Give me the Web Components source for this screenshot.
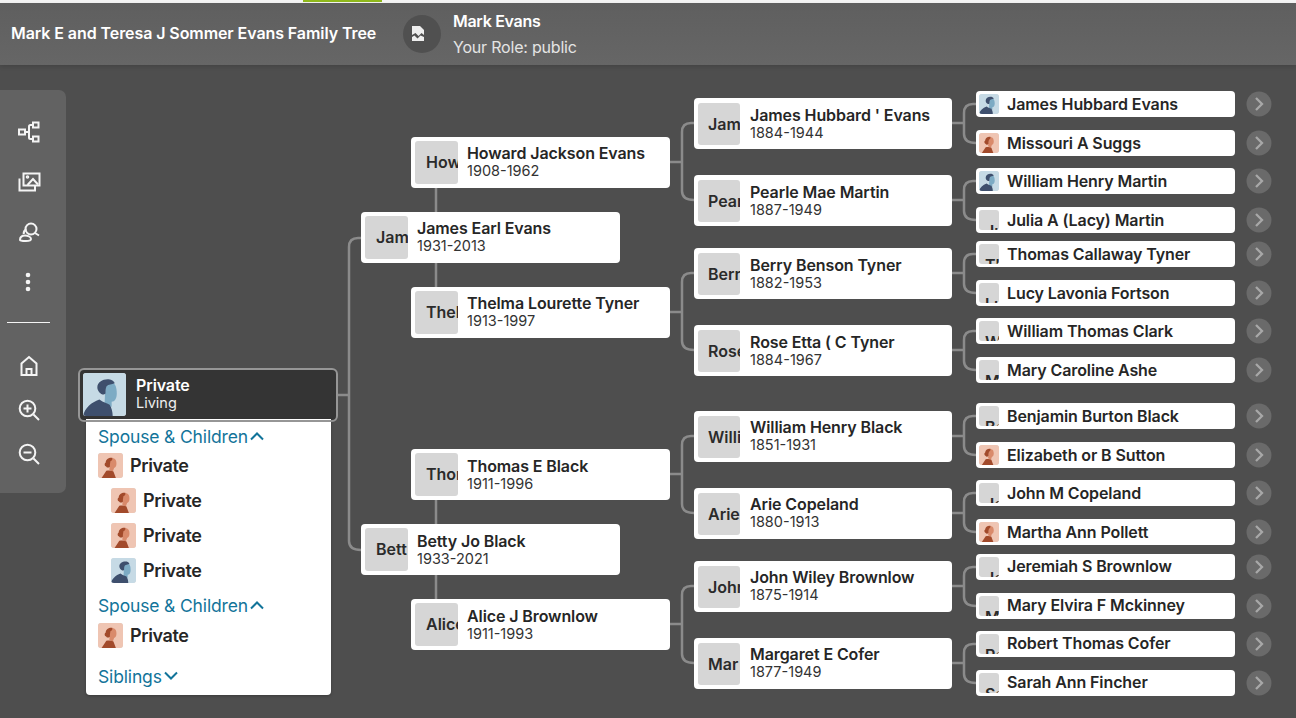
<!DOCTYPE html>
<html>
<head>
<meta charset="utf-8">
<title>Family Tree</title>
<style>
  html, body { margin: 0; height: 100%; overflow: hidden; background: #4e4e4e; font-family: Inter, "Liberation Sans", sans-serif; }
</style>
</head>
<body>
<family-page></family-page>
<script>
const ICONS = {
  tree: `<path d="M8 12h4M12 12V6.500q0-1.500 1.500-1.500H16M12 12v5.500q0 1.500 1.500 1.500H16"/><rect x="2" y="9.500" width="6" height="5"/><rect x="16" y="2.500" width="5.500" height="5"/><rect x="16" y="16.500" width="5.500" height="5"/>`,
  photos: `<rect x="6.500" y="3.500" width="16" height="12"/><path d="M2.500 8.500v12h15.500v-5M10.500 15l5.500-6 5 5.500"/><circle cx="10.500" cy="7" r=".8"/>`,
  search: `<circle cx="14" cy="9" r="5.500"/><path d="M18 13l4 2.500M9.500 9.500c-2 .5-3 2-2.800 4.500M3 20c0-3 2-4.500 5-4.500s6 1.500 6 3.500c0 1.500-1.500 2-5 2s-6-.3-6-1z"/>`,
  home: `<path d="M4.500 21V9.500L12 3l7.500 6.500V21zM9.500 21v-6h5v6"/>`,
  zoomin: `<circle cx="10.500" cy="10.500" r="7.800"/><path d="M16.500 16.500L22 22M6.500 10.500h8M10.500 6.500v8"/>`,
  zoomout: `<circle cx="10.500" cy="10.500" r="7.800"/><path d="M16.500 16.500L22 22M6.500 10.500h8"/>`,
};

class PersonAvatar extends HTMLElement {
  connectedCallback() {
    const kind = this.getAttribute("kind");
    const label = this.getAttribute("label") || "";
    const male = `<rect width="42" height="42" fill="#c6dae5"/>
      <path d="M22 9h6c4 1 5 6 5 11 0 5-2 8-5 8v5l-7-1z" fill="#7dabc4"/>
      <path d="M14 14c0-5 5-8 10-8 3 0 6 1 7 4-3 1-6 1-8 3-1 2-1 5-1 7-1 1-2 1-3 1-3-1-5-4-5-7z" fill="#3e4f6d"/>
      <path d="M0 42c2-8 8-13 16-16 4 3 8 4 10 5 2 3 3 7 3 11z" fill="#3e4f6d"/>`;
    const female = `<rect width="42" height="42" fill="#efc5b3"/>
      <path d="M21 9h5c4 1 5 5 5 9 0 4-2 7-4 7l-2 6-6-3z" fill="#d98a6b"/>
      <path d="M14 23c-3-1-4-5-1-7 0-6 6-9 11-8 1 3-1 5-3 6-1 3-1 6-1 9-2 2-5 2-6 0z" fill="#a24a2b"/>
      <path d="M6 42l8-12c4-1 8-1 12 1l4 11z" fill="#a24a2b"/>`;
    let inner = "";
    if (kind === "m") inner = `<svg viewBox="0 0 42 42">${male}</svg>`;
    else if (kind === "f") inner = `<svg viewBox="0 0 42 42">${female}</svg>`;
    else inner = `<span>${label}</span>`;
    this.attachShadow({ mode: "open" }).innerHTML = `
    <style>
      :host { display: block; flex: none; overflow: hidden; border-radius: 3px; background: #d6d6d6; width: var(--av, 43px); height: var(--av, 43px); }
      svg { display: block; width: 100%; height: 100%; }
      span {
        display: block;
        padding: 12px 0 0 var(--av-inset, 11px);
        font-size: 16px;
        line-height: 19px;
        font-weight: 600;
        color: #2b2b2b;
        white-space: nowrap;
      }
    </style>
    ${inner}`;
  }
}
customElements.define("person-avatar", PersonAvatar);

class PersonCard extends HTMLElement {
  connectedCallback() {
    const name = this.getAttribute("name");
    const years = this.getAttribute("years");
    const kind = this.getAttribute("kind") || "";
    const label = this.getAttribute("label") || "";
    const small = !years;
    this.attachShadow({ mode: "open" }).innerHTML = `
    <style>
      :host {
        display: flex;
        align-items: center;
        box-sizing: border-box;
        background: #fff;
        border-radius: 4px;
        color: #262626;
        padding: 0 4px;
        gap: 9px;
        overflow: hidden;
      }
      :host([wide]) { --av: 42px; --av-inset: 10px; gap: 10px; padding: 0 4px; }
      :host([small]) { padding: 0 3px; gap: 8px; --av: 20px; --av-inset: 6px; }
      :host([lift]) .text { margin-bottom: 2px; }
      .name { font-size: 16px; line-height: 17px; font-weight: 600; letter-spacing: -.1px; white-space: nowrap; }
      .years { font-size: 14.500px; line-height: 17px; color: #333; }
    </style>
    <person-avatar kind="${kind}" label="${label}"></person-avatar>
    <div class="text">
      <div class="name">${name}</div>
      ${small ? "" : `<div class="years">${years}</div>`}
    </div>`;
  }
}
customElements.define("person-card", PersonCard);

class RelationHead extends HTMLElement {
  connectedCallback() {
    const up = this.hasAttribute("open");
    this.attachShadow({ mode: "open" }).innerHTML = `
    <style>
      :host { display: flex; align-items: center; height: 22px; gap: 1px; color: #12749a; font-size: 17.500px; letter-spacing: -.15px; }
      svg { width: 16px; height: 10px; fill: none; stroke: #12749a; stroke-width: 2; }
    </style>
    <slot></slot>
    <svg viewBox="0 0 16 10"><path d="${up ? "M2 8.500l6-6 6 6" : "M2 1.500l6 6 6-6"}"/></svg>`;
  }
}
customElements.define("relation-head", RelationHead);

class RelationRow extends HTMLElement {
  connectedCallback() {
    const kind = this.getAttribute("kind");
    this.attachShadow({ mode: "open" }).innerHTML = `
    <style>
      :host { display: flex; align-items: center; gap: 7px; height: 25px; font-size: 18px; font-weight: 600; letter-spacing: -.4px; color: #262626; --av: 25px; }
      :host([nested]) { margin-left: 13px; }
    </style>
    <person-avatar kind="${kind}"></person-avatar>
    <slot></slot>`;
  }
}
customElements.define("relation-row", RelationRow);

class RootPerson extends HTMLElement {
  connectedCallback() {
    this.attachShadow({ mode: "open" }).innerHTML = `
    <style>
      :host { display: block; width: 260px; color: #262626; }
      .card {
        display: flex; align-items: center; gap: 10px;
        box-sizing: border-box; height: 54px; padding: 0 3px 2px;
        background: #343434; border: 2px solid #969696; border-radius: 6px;
        color: #fff; --av: 43px;
      }
      .name { font-size: 16px; line-height: 18px; font-weight: 600; letter-spacing: -.1px; }
      .sub { font-size: 14.500px; line-height: 18px; color: #eee; }
      .menu {
        box-sizing: border-box; width: 245px; height: 276px; margin: -3px 0 0 8px;
        padding: 6px 12px 0 12px;
        background: linear-gradient(#fff 1px, #969696 1px, #969696 3px, #fff 3px);
        border-radius: 0 0 4px 4px;
        box-shadow: 0 1px 3px rgba(0,0,0,.25);
        position: relative;
      }
      relation-row { margin-top: 10px; }
      relation-head + relation-row { margin-top: 6px; }
      .second { margin-top: 11px; }
      .second + relation-row { margin-top: 7px; }
      .third { margin-top: 17px; }
    </style>
    <div class="card">
      <person-avatar kind="m"></person-avatar>
      <div><div class="name">Private</div><div class="sub">Living</div></div>
    </div>
    <div class="menu">
      <relation-head open>Spouse &amp; Children</relation-head>
      <relation-row kind="f">Private</relation-row>
      <relation-row kind="f" nested>Private</relation-row>
      <relation-row kind="f" nested>Private</relation-row>
      <relation-row kind="m" nested>Private</relation-row>
      <relation-head open class="second">Spouse &amp; Children</relation-head>
      <relation-row kind="f">Private</relation-row>
      <relation-head class="third">Siblings</relation-head>
    </div>`;
  }
}
customElements.define("root-person", RootPerson);

class PedigreeTree extends HTMLElement {
  connectedCallback() {
    // page coordinates of the nodes, the canvas starts at 66,65
    const OX = 66, OY = 65;
    const big = [
      [361, 212, "James Earl Evans", "1931-2013", "Jam", 1],
      [361, 524, "Betty Jo Black", "1933-2021", "Bett", 0],
      [411, 137, "Howard Jackson Evans", "1908-1962", "How", 1],
      [411, 287, "Thelma Lourette Tyner", "1913-1997", "Thel", 1],
      [411, 449, "Thomas E Black", "1911-1996", "Thor", 0],
      [411, 599, "Alice J Brownlow", "1911-1993", "Alice", 0],
      [694, 98, "James Hubbard ' Evans", "1884-1944", "Jam", 0],
      [694, 175, "Pearle Mae Martin", "1887-1949", "Pear", 0],
      [694, 248, "Berry Benson Tyner", "1882-1953", "Berr", 0],
      [694, 325, "Rose Etta ( C Tyner", "1884-1967", "Rose", 0],
      [694, 411, "William Henry Black", "1851-1931", "Willi", 1],
      [694, 488, "Arie Copeland", "1880-1913", "Arie", 1],
      [694, 561, "John Wiley Brownlow", "1875-1914", "John", 1],
      [694, 638, "Margaret E Cofer", "1877-1949", "Mar", 1],
    ];
    const small = [
      [91, "James Hubbard Evans", "m"], [130, "Missouri A Suggs", "f"],
      [168, "William Henry Martin", "m"], [207, "Julia A (Lacy) Martin", ""],
      [241, "Thomas Callaway Tyner", ""], [280, "Lucy Lavonia Fortson", ""],
      [318, "William Thomas Clark", ""], [357, "Mary Caroline Ashe", ""],
      [403, "Benjamin Burton Black", ""], [442, "Elizabeth or B Sutton", "f"],
      [480, "John M Copeland", ""], [519, "Martha Ann Pollett", "f"],
      [554, "Jeremiah S Brownlow", "", 1], [593, "Mary Elvira F Mckinney", "", 1],
      [631, "Robert Thomas Cofer", "", 1], [670, "Sarah Ann Fincher", "", 1],
    ];

    const fork = (x0, y0, xm, x1, ya, yb) => {
      const r = 9;
      return `M${x0} ${y0}H${xm}M${x1} ${ya}H${xm + r}Q${xm} ${ya} ${xm} ${ya + r}V${yb - r}Q${xm} ${yb} ${x1} ${yb}`;
    };
    let d = fork(338, 395, 349, 361, 238, 550);
    [[188, 212], [263, 287], [500, 524], [575, 599]].forEach(([a, b]) => { d += `M436 ${a}V${b}`; });
    [[137, 98, 175], [287, 248, 325], [449, 411, 488], [599, 561, 638]].forEach(([y, a, b]) => {
      d += fork(670, y + 25, 682, 694, a + 25, b + 25);
    });
    for (let i = 0; i < 8; i++) {
      const y = big[6 + i][1] + 25;
      d += fork(952, y, 964, 976, small[i * 2][0] + 13, small[i * 2 + 1][0] + 13);
    }

    const bigNodes = big.map(([x, y, n, yrs, label, lift]) => {
      const w = x === 694 ? 258 : 259;
      return `<person-card class="node" ${x === 694 ? "wide" : ""} ${lift ? "lift" : ""} style="left:${x - OX}px;top:${y - OY}px;width:${w}px;height:51px" name="${n}" years="${yrs}" label="${label}"></person-card>`;
    }).join("");
    const smallNodes = small.map(([y, n, k, lift]) =>
      `<person-card small ${lift ? "lift" : ""} class="node" style="left:${976 - OX}px;top:${y - OY}px;width:259px;height:26px" name="${n}" kind="${k}" label="${n.slice(0, 2)}"></person-card>
       <svg class="more" style="left:${1246 - OX}px;top:${y - OY}px" viewBox="0 0 26 26"><circle cx="13" cy="13" r="12.500" fill="#6a6a6a"/><path d="M10 7l6 6-6 6" fill="none" stroke="#a8a8a8" stroke-width="2.300"/></svg>`
    ).join("");

    this.attachShadow({ mode: "open" }).innerHTML = `
    <style>
      :host { display: block; position: relative; flex: 1; height: 100%; }
      .lines { position: absolute; left: ${-OX}px; top: ${-OY}px; width: 1296px; height: 718px; fill: none; stroke: #8b8b8b; stroke-width: 2.500; }
      .node { position: absolute; }
      .more { position: absolute; width: 26px; height: 26px; }
      root-person { position: absolute; left: ${78 - OX}px; top: ${368 - OY}px; }
    </style>
    <svg class="lines" viewBox="0 0 1296 718"><path d="${d}"/></svg>
    ${bigNodes}${smallNodes}
    <root-person></root-person>`;
  }
}
customElements.define("pedigree-tree", PedigreeTree);

class ToolBar extends HTMLElement {
  connectedCallback() {
    const btn = (name) => `<div class="btn"><svg viewBox="0 0 24 24">${ICONS[name]}</svg></div>`;
    this.attachShadow({ mode: "open" }).innerHTML = `
    <style>
      :host {
        display: block; flex: none; box-sizing: border-box; width: 66px; height: 403px;
        margin-top: 25px; padding-top: 17px;
        background: #626262; border-radius: 0 7px 7px 0;
      }
      .btn { display: flex; align-items: center; justify-content: center; height: 50px; width: 57px; }
      .low .btn { height: 44px; }
      svg { width: 24px; height: 24px; fill: none; stroke: #f4f4f4; stroke-width: 2; }
      .dots svg { fill: #f4f4f4; stroke: none; margin-left: -2px; }
      hr { width: 43px; height: 1px; margin: 15px 0 21px 7px; border: 0; background: #f4f4f4; }
    </style>
    ${btn("tree")}${btn("photos")}${btn("search")}
    <div class="btn dots"><svg viewBox="0 0 24 24"><circle cx="12" cy="5" r="2.300"/><circle cx="12" cy="12" r="2.300"/><circle cx="12" cy="19" r="2.300"/></svg></div>
    <hr>
    <div class="low">${btn("home")}${btn("zoomin")}${btn("zoomout")}</div>`;
  }
}
customElements.define("tool-bar", ToolBar);

class FamilyHeader extends HTMLElement {
  connectedCallback() {
    this.attachShadow({ mode: "open" }).innerHTML = `
    <style>
      :host { display: block; flex: none; color: #fff; }
      .strip { height: 3px; background: #f4f4f4; }
      .strip div { width: 79px; height: 2px; margin-left: 303px; background: #8fb81c; }
      .bar {
        display: flex; align-items: center; box-sizing: border-box;
        height: 62px; padding-left: 11px;
        background: linear-gradient(#5f5f5f, #666);
        box-shadow: 0 2px 4px rgba(0,0,0,.12);
      }
      .title { width: 392px; font-size: 16px; font-weight: 600; letter-spacing: -.08px; white-space: nowrap; margin-top: -2px; }
      .logo { width: 38px; height: 38px; border-radius: 50%; background: #505050; display: flex; align-items: center; justify-content: center; margin-right: 12px; }
      .logo svg { width: 16px; height: 16px; margin-left: -8px; fill: #eee; }
      .who { font-size: 16px; line-height: 26px; }
      .who b { display: block; font-weight: 600; letter-spacing: -.3px; }
      .who span { color: #e4e4e4; letter-spacing: -.2px; }
    </style>
    <div class="strip"><div></div></div>
    <div class="bar">
      <div class="title">Mark E and Teresa J Sommer Evans Family Tree</div>
      <div class="logo"><svg viewBox="0 0 16 16"><path d="M2 0h8l4 4v5l-2.500-2-3 3-3-3L2 9zM2 11l2.500-1.500 3 3 3-3L14 11v4H2z"/></svg></div>
      <div class="who"><b>Mark Evans</b><span>Your Role: public</span></div>
    </div>`;
  }
}
customElements.define("family-header", FamilyHeader);

class FamilyPage extends HTMLElement {
  connectedCallback() {
    this.attachShadow({ mode: "open" }).innerHTML = `
    <style>
      :host { display: flex; flex-direction: column; height: 718px; background: #4e4e4e; }
      main { display: flex; flex: 1; min-height: 0; }
    </style>
    <family-header></family-header>
    <main>
      <tool-bar></tool-bar>
      <pedigree-tree></pedigree-tree>
    </main>`;
  }
}
customElements.define("family-page", FamilyPage);
</script>
</body>
</html>
